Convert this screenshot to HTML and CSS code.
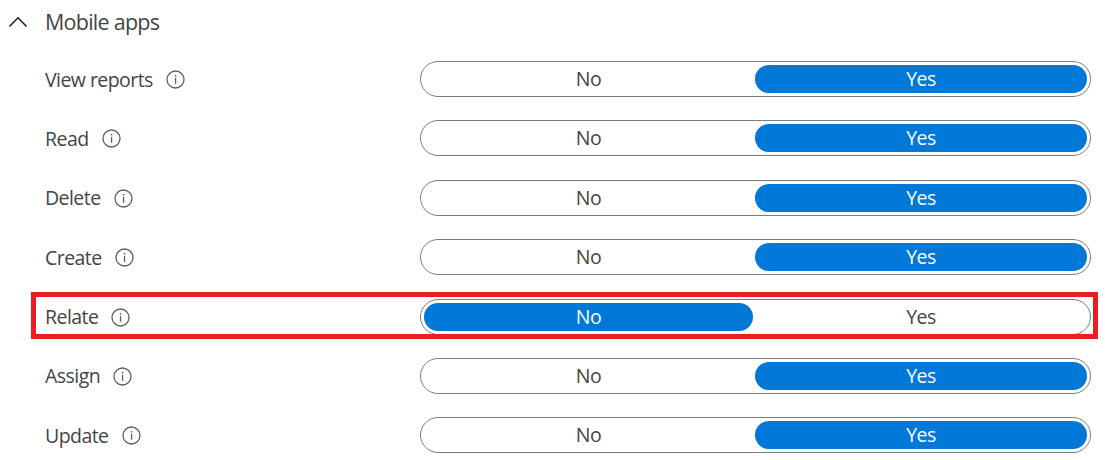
FILE: index.html
```
<!DOCTYPE html>
<html lang="en">
<head>
    <meta charset="UTF-8">
    <title>Mobile apps</title>
    <link rel="stylesheet" href="styles.css">
</head>
<body>
    <svg class="defs" width="0" height="0">
        <symbol id="info" viewBox="0 0 19 19">
            <circle cx="9.5" cy="9.5" r="8.5" fill="none" stroke="#605e5c" stroke-width="1.3"/>
            <rect x="8.9" y="7.8" width="1.3" height="6" fill="#605e5c"/>
            <rect x="8.8" y="5" width="1.5" height="1.5" fill="#605e5c"/>
        </symbol>
    </svg>

    <div class="header">
        <svg class="chevron" viewBox="0 0 20 12"><path d="M1.5 10.6 L10 1.8 L18.5 10.6"/></svg>
        <h2>Mobile apps</h2>
    </div>

    <div class="permissions">
        <div class="row">
            <div class="label"><span>View reports</span><svg class="info"><use href="#info"/></svg></div>
            <div class="toggle"><span class="option">No</span><span class="option selected">Yes</span></div>
        </div>
        <div class="row">
            <div class="label"><span>Read</span><svg class="info"><use href="#info"/></svg></div>
            <div class="toggle"><span class="option">No</span><span class="option selected">Yes</span></div>
        </div>
        <div class="row">
            <div class="label"><span>Delete</span><svg class="info"><use href="#info"/></svg></div>
            <div class="toggle"><span class="option">No</span><span class="option selected">Yes</span></div>
        </div>
        <div class="row">
            <div class="label"><span>Create</span><svg class="info"><use href="#info"/></svg></div>
            <div class="toggle"><span class="option">No</span><span class="option selected">Yes</span></div>
        </div>
        <div class="row highlight">
            <div class="label"><span>Relate</span><svg class="info"><use href="#info"/></svg></div>
            <div class="toggle"><span class="option selected">No</span><span class="option">Yes</span></div>
        </div>
        <div class="row">
            <div class="label"><span>Assign</span><svg class="info"><use href="#info"/></svg></div>
            <div class="toggle"><span class="option">No</span><span class="option selected">Yes</span></div>
        </div>
        <div class="row">
            <div class="label"><span>Update</span><svg class="info"><use href="#info"/></svg></div>
            <div class="toggle"><span class="option">No</span><span class="option selected">Yes</span></div>
        </div>
    </div>
</body>
</html>
```
FILE: styles.css
```
*, *::after {
    box-sizing: border-box;
}
body {
    margin: 0;
    background-color: #fff;
    color: #444;
    font-family: "Segoe UI", "Open Sans", sans-serif;
    font-size: 19.5px;
    letter-spacing: -0.55px;
    overflow: hidden;
}
.defs {
    display: block;
}
.header {
    display: flex;
    align-items: center;
    height: 49.45px;
    padding: 0 0 5px 8px;
}
.header h2 {
    margin: 0 0 2px;
    font-size: 21.5px;
    font-weight: 400;
    letter-spacing: -0.75px;
}
.chevron {
    width: 20px;
    height: 12px;
    margin-right: 17px;
}
.chevron path {
    fill: none;
    stroke: #1b1a19;
    stroke-width: 1.5;
}
.row {
    position: relative;
    display: grid;
    grid-template-columns: 375px 671px;
    align-items: center;
    height: 59.36px;
    margin-left: 45px;
}
.label {
    display: flex;
    align-items: center;
    gap: 13px;
    padding-top: 1px;
    line-height: 26px;
}
.info {
    width: 19px;
    height: 19px;
}
.toggle {
    display: grid;
    grid-template-columns: 329px 332px;
    gap: 2px;
    height: 36px;
    padding: 3px;
    border: 1px solid #7d7d7d;
    border-radius: 18px;
}
.option {
    border-radius: 14px;
    line-height: 27.6px;
    text-align: center;
}
.selected {
    background-color: #0078d7;
    color: #fff;
}
/* red frame drawn over the row */
.highlight::after {
    content: "";
    position: absolute;
    top: 5.2px;
    left: -14px;
    width: 1067px;
    height: 47px;
    border: 5px solid #ed1c24;
}
```
